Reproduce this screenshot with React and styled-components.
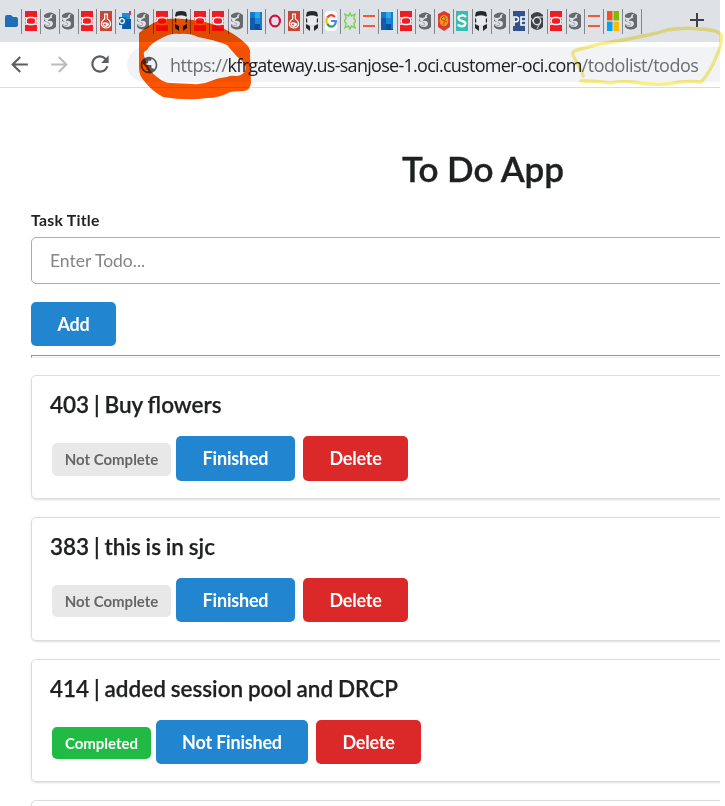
import React from "react";
import styled, { createGlobalStyle } from "styled-components";
import { MdArrowBack, MdArrowForward, MdRefresh, MdPublic } from "react-icons/md";

const GlobalStyle = createGlobalStyle`
  * { box-sizing: border-box; }
  body { margin: 0; background: #fff; overflow: hidden; font-family: Lato, "Liberation Sans", sans-serif; }
`;

const Page = styled.div`
  position: relative;
  width: 725px;
  height: 806px;
  overflow: hidden;
  background: #fff;
`;

const Browser = styled.div`
  width: 720px;
  height: 806px;
  overflow: hidden;
`;

const TabStrip = styled.div`
  display: flex;
  align-items: flex-start;
  height: 42px;
  padding-top: 9px;
  background: #dee1e6;
`;

const FirstTab = styled.div`
  width: 21.4px;
  height: 24px;
  padding: 6px 0 0 5px;
  flex: none;
`;

const Tab = styled.div`
  flex: none;
  width: 18.77px;
  height: 25px;
  padding: 2px 0 0 2.4px;
  border-left: 1px solid #83868b;
`;

const LastDivider = styled.div`
  width: 1px;
  height: 25px;
  background: #83868b;
`;

const NewTab = styled.div`
  margin: 3px 0 0 47px;
  height: 18px;
`;

const Toolbar = styled.div`
  display: flex;
  align-items: center;
  height: 46px;
  padding-left: 7px;
  border-bottom: 1px solid #d9dbde;
  background: #fff;
  color: #5f6368;
`;

const NavButton = styled.div`
  display: flex;
  width: 40px;
  padding-bottom: 1px;
  color: ${(p) => (p.$disabled ? "#babcbe" : "#5a5d63")};
`;

const AddressBar = styled.div`
  display: flex;
  align-items: center;
  flex: 1;
  height: 35px;
  padding-left: 12px;
  border-radius: 18px 0 0 18px;
  background: #f1f3f4;
`;

const Url = styled.div`
  margin-left: 11px;
  font: 400 18px/24px "Open Sans", "Noto Sans", sans-serif;
  letter-spacing: -0.48px;
  white-space: nowrap;
  color: #6b6e73;
`;

const Host = styled.span`
  color: #202124;
  letter-spacing: -0.72px;
`;

const Main = styled.main`
  width: 904px;
  margin-left: 31px;
  padding-top: 58px;
  color: #1f2021;
`;

const Title = styled.h1`
  margin: 0;
  font-size: 35px;
  line-height: 45px;
  font-weight: 600;
  letter-spacing: -0.1px;
  -webkit-text-stroke: 0.35px currentColor;
  text-align: center;
`;

const FieldLabel = styled.label`
  display: block;
  margin-top: 19px;
  font-size: 15.8px;
  letter-spacing: 0.25px;
  line-height: 20px;
  font-weight: 700;
`;

const TextInput = styled.input`
  display: block;
  width: 100%;
  height: 47px;
  margin: 7px 0 18px;
  padding: 0 18px;
  border: 1px solid #85b7d9;
  border-radius: 5px;
  font: 400 17.5px Lato, sans-serif;
  outline: none;
  &::placeholder { color: #858585; opacity: 1; }
`;

const Button = styled.button`
  height: ${(p) => p.$height || 44.5}px;
  width: ${(p) => p.$width}px;
  padding: 0;
  border: 0;
  border-radius: 5px;
  background: ${(p) => (p.$danger ? "#db2828" : "#2185d0")};
  color: #fff;
  font: 700 18px/20px Lato, sans-serif;
  letter-spacing: -0.2px;
`;

const Divider = styled.div`
  height: 3px;
  margin: 9px 0 17px;
  border: 1px solid #8f9492;
  border-bottom-color: #eeeeec;
`;

const Card = styled.section`
  height: 123.75px;
  margin-bottom: 18px;
  padding: 14px 18px;
  border: 1px solid #dcdddd;
  border-radius: 5px;
  box-shadow: 0 1px 2px rgba(34, 36, 38, 0.15);
`;

const CardTitle = styled.h2`
  margin: 0;
  font-size: 22.5px;
  line-height: 30px;
  font-weight: 600;
  word-spacing: -0.8px;
  -webkit-text-stroke: 0.25px currentColor;
`;

const Actions = styled.div`
  display: flex;
  align-items: flex-start;
  margin-top: 16px;
  padding-left: 2px;
`;

const Status = styled.div`
  width: ${(p) => p.$width}px;
  height: 32.5px;
  margin: 7px 5px 0 0;
  border-radius: 5px;
  background: ${(p) => (p.$done ? "#21ba45" : "#e8e8e8")};
  color: ${(p) => (p.$done ? "#fff" : "#666")};
  font-size: 15px;
  line-height: 32px;
  font-weight: 700;
  text-align: center;
`;

const ButtonGroup = styled.div`
  display: flex;
  gap: 8px;
`;

const Ink = styled.svg`
  position: absolute;
  left: 0;
  top: 0;
  mix-blend-mode: multiply;
  pointer-events: none;
`;

const glyphs = {
  oracle: (
    <>
      <path d="M0 0H12V20H0Z" fill="#ee1c25" />
      <rect x="1" y="6.5" width="10" height="7" rx="3.5" fill="none" stroke="#fff" strokeWidth="1.6" />
      <path d="M0 6.2H2V7.6H0ZM10 6.2H12V7.6H10ZM0 12.4H2V13.8H0ZM10 12.4H12V13.8H10Z" fill="#fff" />
    </>
  ),
  globe: (
    <>
      <path d="M0 4Q3 1 7 1.5Q10 2 12 4V16Q9 19 5 18.5Q2 18 0 16V13Q3 15 6 14Q5 12 3 11L0 10Z" fill="#666a6e" />
      <path d="M0 6Q3 8 6 6Q6 3 9 3Q7 5 8 7Q4 8 4 10Q8 9 9 12Q9 16 5 16Q2 16 0 13.5Q4 15.5 6 14Q6 11.5 3 11Q0 10 0 6Z" fill="#dee1e6" />
    </>
  ),
  flask: (
    <>
      <path d="M0 0H12V20H0Z" fill="#c74634" />
      <path d="M4 3H8M4.7 3V8Q1 10 1.5 14Q3 17 6 17T10.5 14Q11 10 7.3 8V3" fill="none" stroke="#fff" strokeWidth="1.2" />
      <path d="M2.5 12Q6 10 9.5 13Q8 16 6 16Q3 16 2.5 12Z" fill="#fff" />
      <circle cx="5" cy="13.5" r="1" fill="#c74634" />
    </>
  ),
  outlook: (
    <>
      <path d="M3 2H11V17H3Z" fill="#1490df" />
      <path d="M5 8H12V18H3Z" fill="#0a5aa8" />
      <path d="M0 6H7V14H0Z" fill="#1267b4" />
      <circle cx="3" cy="10" r="2.3" fill="none" stroke="#fff" strokeWidth="1.3" />
      <path d="M10 0H12V4H10Z" fill="#e0344c" />
    </>
  ),
  github: (
    <>
      <path d="M1 6Q6 4 11 6V11Q10 14 6 14Q2 14 1 11Z" fill="#e9ebee" />
      <path d="M1 1Q6-1 11 1L12 5Q10.5 6 10 5Q6 3.6 2 5Q1.5 6 0 5Z" fill="#25292e" />
      <path d="M0 7L1.2 8V12L0 11ZM12 7L10.8 8V12L12 11Z" fill="#25292e" />
      <path d="M0 13L4 15V20L0 17ZM12 13L8 15V20L12 17Z" fill="#25292e" />
    </>
  ),
  blue: (
    <>
      <path d="M0 1H12V19H0Z" fill="#0f5db2" />
      <path d="M5 1H12V7H5Z" fill="#31a9e6" />
      <path d="M5 7H12V13H5Z" fill="#1989d7" />
      <path d="M0 1H5V7H0Z" fill="#1679cc" />
      <path d="M5 13H12V19H5Z" fill="#0b4f9c" />
      <path d="M10 1H12V18H10Z" fill="#137cc7" />
    </>
  ),
  ring: <ellipse cx="6" cy="10" rx="4.9" ry="5.3" fill="none" stroke="#d80b3d" strokeWidth="2.2" />,
  google: (
    <>
      <rect width="12" height="20" rx="4" fill="#fff" />
      <path d="M10 6Q6 2 2.2 6.5" fill="none" stroke="#ea4335" strokeWidth="2.2" />
      <path d="M2.2 6.5Q.5 10 2.2 13" fill="none" stroke="#fbbc05" strokeWidth="2.2" />
      <path d="M2.2 13Q5 17 9 14.8" fill="none" stroke="#34a853" strokeWidth="2.2" />
      <path d="M6 10H10.8Q11 13 9 14.8" fill="none" stroke="#4285f4" strokeWidth="2.2" />
    </>
  ),
  spike: (
    <path d="M6 2L7.5 5L11 3L9.8 7.5L12 10L9.8 12.5L11 17L7.5 15L6 18L4.5 15L1 17L2.2 12.5L0 10L2.2 7.5L1 3L4.5 5Z" fill="none" stroke="#77d04b" strokeWidth="1.3" />
  ),
  equals: <path d="M0 5H12M0 15H12" stroke="#f05a3b" strokeWidth="2" />,
  hexagon: (
    <>
      <path d="M0 3L6 0L12 3V16L6 20L0 16Z" fill="#d83b2f" />
      <ellipse cx="6" cy="9.5" rx="4.4" ry="5.5" fill="#f3961e" />
      <path d="M3 8L6 5L8 8L6 10ZM5 14L7 10L9 11" fill="none" stroke="#c84c22" />
    </>
  ),
  letterS: (
    <>
      <path d="M0 0H12V20H0Z" fill="#37beb0" />
      <path d="M10 6Q8 4 5.5 4.5Q2 5 2.5 7.5Q3 9.3 6 10Q9.7 11 9.3 13Q8.5 15.5 5.5 15.3Q3 15 1.8 13.5" fill="none" stroke="#fff" strokeWidth="2.4" />
    </>
  ),
  pe: (
    <>
      <path d="M0 0H12V20H0Z" fill="#32528f" />
      <path d="M1 15V6H3Q5.5 6 5.5 8.3T3 10.7H1M12 6H8V14H12M8 10H12" fill="none" stroke="#fff" strokeWidth="1.6" />
    </>
  ),
  chrome: (
    <>
      <path d="M0 4Q6-2 12 4V16Q6 22 0 16Z" fill="#3f4246" />
      <circle cx="6" cy="10" r="3.7" fill="#3f4246" stroke="#dee1e6" strokeWidth="1.4" />
      <path d="M6 6H12M3 12L0 7M9 12L6 18" stroke="#dee1e6" />
    </>
  ),
  windows: (
    <>
      <path d="M0 0H5.5V9.4H0Z" fill="#f25022" />
      <path d="M6.5 0H12V9.4H6.5Z" fill="#7fba00" />
      <path d="M0 10.6H5.5V20H0Z" fill="#00a4ef" />
      <path d="M6.5 10.6H12V20H6.5Z" fill="#ffb900" />
    </>
  ),
};

const tabs = [
  "oracle", "globe", "globe", "oracle", "flask", "outlook", "globe", "oracle", "github", "oracle", "oracle",
  "globe", "blue", "ring", "flask", "github", "google", "spike", "equals", "blue", "oracle", "globe",
  "hexagon", "letterS", "github", "globe", "pe", "chrome", "oracle", "globe", "equals", "windows", "globe",
];

const todos = [
  { id: 403, title: "Buy flowers", done: false },
  { id: 383, title: "this is in sjc", done: false },
  { id: 414, title: "added session pool and DRCP", done: true },
];

function Todo({ todo }) {
  return (
    <Card>
      <CardTitle>{todo.id} | {todo.title}</CardTitle>
      <Actions>
        <Status $done={todo.done} $width={todo.done ? 99 : 119}>{todo.done ? "Completed" : "Not Complete"}</Status>
        <ButtonGroup>
          <Button $width={todo.done ? 152 : 119}>{todo.done ? "Not Finished" : "Finished"}</Button>
          <Button $danger $width={105}>Delete</Button>
        </ButtonGroup>
      </Actions>
    </Card>
  );
}

export default function App() {
  return (
    <Page>
      <GlobalStyle />
      <Browser>
        <TabStrip>
          <FirstTab>
            <svg width="13" height="13" display="block">
              <path d="M0 2Q0 0 2 0H6L8 2H11Q13 2 13 4V10Q13 12 11 12H0Z" fill="#1f6fb8" />
            </svg>
          </FirstTab>
          {tabs.map((name, i) => (
            <Tab key={i}>
              <svg width="12" height="20" viewBox="0 0 12 20" display="block">{glyphs[name]}</svg>
            </Tab>
          ))}
          <LastDivider />
          <NewTab>
            <svg width="16" height="16" display="block"><path d="M8 1V15M1 8H15" stroke="#3f4246" strokeWidth="2" /></svg>
          </NewTab>
        </TabStrip>
        <Toolbar>
          <NavButton><MdArrowBack size={25} /></NavButton>
          <NavButton $disabled><MdArrowForward size={25} /></NavButton>
          <NavButton><MdRefresh size={26} /></NavButton>
          <AddressBar>
            <MdPublic size={20} color="#55595f" />
            <Url>https://<Host>kfrgateway.us-sanjose-1.oci.customer-oci.com</Host>/todolist/todos</Url>
          </AddressBar>
        </Toolbar>
        <Main>
          <Title>To Do App</Title>
          <FieldLabel htmlFor="todo">Task Title</FieldLabel>
          <TextInput id="todo" placeholder="Enter Todo..." />
          <Button $width={85} $height={44}>Add</Button>
          <Divider />
          {todos.map((todo) => <Todo key={todo.id} todo={todo} />)}
          <Card />
        </Main>
      </Browser>
      <Ink width="725" height="110">
        <path
          fill="#ff5500"
          fillRule="evenodd"
          d="M139 33Q148 25 160 20Q177 17 193 20Q213 22 230 32Q240 38 245 43Q251 48 250 54L251 83Q250 90 244 91Q237 91 230 92Q219 98 207 98Q187 101 163 97Q152 91 145 82Q139 76 139 68ZM147 50Q151 43 160 39Q170 33 179 34Q190 33 198 37Q215 40 227 45L233 52Q237 57 241 60Q247 65 245 71Q242 76 236 76Q231 75 227 77Q217 78 211 81Q202 85 193 84L171 83Q164 83 157 77Q150 72 147 64Q143 55 144 52Z"
        />
        <path
          fill="none"
          stroke="#faee8c"
          strokeWidth="3.4"
          strokeLinecap="round"
          strokeLinejoin="round"
          d="M583 76Q582 70 579 67L573 55Q572 51 577 50L600 44Q625 40 648 35Q662 32 667 30Q684 27 700 29Q719 30 721 35Q722 45 717 55Q710 73 701 82Q691 81 680 82Q665 85 653 84Q642 84 633 82Q620 81 610 83Q600 81 581 81"
        />
      </Ink>
    </Page>
  );
}
